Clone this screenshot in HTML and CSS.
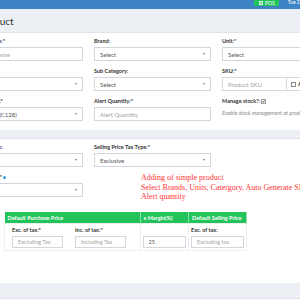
FILE: index.html
```html
<!DOCTYPE html>
<html lang="en">
<head>
    <meta charset="UTF-8">
    <meta name="viewport" content="width=device-width, initial-scale=1.0">
    <title>Add new product</title>
    <link rel="stylesheet" href="styles.css">
</head>
<body>
    <div class="topbar">
        <a class="btn-pos">
            <svg width="4" height="4" viewBox="0 0 4 4"><rect x="0" y="0" width="1.7" height="1.7" fill="#fff"/><rect x="2.3" y="0" width="1.7" height="1.7" fill="#fff"/><rect x="0" y="2.3" width="1.7" height="1.7" fill="#fff"/><rect x="2.3" y="2.3" width="1.7" height="1.7" fill="#fff"/></svg>
            POS
        </a>
        <span class="topbar-date">Tue 21</span>
    </div>

    <div class="page">
        <section class="content-header">
            <h1>Add new product</h1>
        </section>

        <div class="content">
            <!-- product details -->
            <div class="box">
                <div class="form-grid">
                    <div class="form-group">
                        <label>Product Name:*</label>
                        <input type="text" class="form-control" placeholder="Product Name">
                    </div>
                    <div class="form-group">
                        <label>Brand:</label>
                        <div class="form-control select"><span>Select</span><span class="caret"></span></div>
                    </div>
                    <div class="form-group">
                        <label>Unit:*</label>
                        <div class="form-control select"><span>Select</span><span class="caret"></span></div>
                    </div>

                    <div class="form-group">
                        <label>Category:</label>
                        <div class="form-control select"><span>Select</span><span class="caret"></span></div>
                    </div>
                    <div class="form-group">
                        <label>Sub Category:</label>
                        <div class="form-control select"><span>Select</span><span class="caret"></span></div>
                    </div>
                    <div class="form-group">
                        <label>SKU:*</label>
                        <div class="input-group">
                            <input type="text" class="form-control" placeholder="Product SKU">
                            <span class="input-addon"><span class="checkbox"></span>Auto SKU</span>
                        </div>
                    </div>

                    <div class="form-group">
                        <label>Barcode Type:*</label>
                        <div class="form-control select"><span>Code 128 (C128)</span><span class="caret"></span></div>
                    </div>
                    <div class="form-group">
                        <label>Alert Quantity:*</label>
                        <input type="text" class="form-control" placeholder="Alert Quantity">
                    </div>
                    <div class="form-group">
                        <label>Manage stock?: <svg class="check" width="5" height="5" viewBox="0 0 5 5"><rect x="0.3" y="0.3" width="4.4" height="4.4" fill="#fff" stroke="#777" stroke-width="0.6"/><path d="M1.1 2.5 L2.1 3.5 L3.9 1.3" fill="none" stroke="#333" stroke-width="0.8"/></svg></label>
                        <p class="help">Enable stock management at product level</p>
                    </div>
                </div>
            </div>

            <!-- pricing -->
            <div class="box box-pricing">
                <div class="form-grid">
                    <div class="form-group">
                        <label>Applicable Tax:</label>
                        <div class="form-control select"><span>None</span><span class="caret"></span></div>
                    </div>
                    <div class="form-group">
                        <label>Selling Price Tax Type:*</label>
                        <div class="form-control select"><span>Exclusive</span><span class="caret"></span></div>
                    </div>
                    <div></div>

                    <div class="form-group">
                        <label>Product Type:* <span class="info"></span></label>
                        <div class="form-control select"><span>Single</span><span class="caret"></span></div>
                    </div>
                    <div class="note">
                        Adding of simple product<br>
                        Select Brands, Units, Catergory, Auto Generate SKU<br>
                        Alert quantity
                    </div>
                </div>

                <table class="price-table">
                    <thead>
                        <tr>
                            <th class="col-purchase">Default Purchase Price</th>
                            <th class="col-margin">x Margin(%)</th>
                            <th class="col-selling">Default Selling Price</th>
                        </tr>
                    </thead>
                    <tbody>
                        <tr>
                            <td>
                                <div class="split">
                                    <div class="field">
                                        <label>Exc. of tax:*</label>
                                        <input type="text" class="form-control" placeholder="Excluding Tax">
                                    </div>
                                    <div class="field">
                                        <label>Inc. of tax:*</label>
                                        <input type="text" class="form-control" placeholder="Including Tax">
                                    </div>
                                </div>
                            </td>
                            <td>
                                <input type="text" class="form-control margin-input" value="25">
                            </td>
                            <td>
                                <div class="field field-selling">
                                    <label>Exc. of tax:</label>
                                    <input type="text" class="form-control" placeholder="Excluding tax">
                                </div>
                            </td>
                        </tr>
                    </tbody>
                </table>
            </div>

            <div class="box"></div>
        </div>
    </div>
</body>
</html>
```

FILE: styles.css
```css
html, body {
  margin: 0;
  height: 300px;
  overflow: hidden;
}

body {
  background-color: #ecf0f5;
  font-family: Lato, "Liberation Sans", sans-serif;
  color: #333;
}

/* top navbar */
.topbar {
  height: 9px;
  background-color: #3d84c6;
  display: flex;
  align-items: flex-start;
  gap: 9px;
  padding-left: 254px;
}

.btn-pos {
  display: flex;
  align-items: center;
  gap: 2px;
  height: 6px;
  padding: 0 4px 0 5px;
  background-color: #22c35a;
  color: white;
  font-size: 5px;
  line-height: 6px;
}

.topbar-date {
  color: white;
  font-size: 5px;
  line-height: 4px;
  white-space: nowrap;
}

/* page */
.page {
  width: 440px;
  margin-left: -62px;
}

.content-header {
  height: 23px;
}

.content-header h1 {
  margin: 0;
  font-size: 10px;
  font-weight: normal;
  line-height: 24px;
}

.content {
  padding-left: 24px;
}

.box {
  background-color: white;
  border-top: 1px solid #dfe3ea;
  padding: 4px 4px 3px;
  margin-bottom: 8px;
}

.box-pricing {
  padding-bottom: 32px;
  margin-bottom: 15px;
}

.form-grid {
  display: grid;
  grid-template-columns: repeat(3, 117px);
  column-gap: 11px;
}

.form-group {
  margin-bottom: 6px;
}

label {
  display: block;
  font-size: 5.5px;
  font-weight: bold;
  line-height: 8px;
  margin-bottom: 2px;
  white-space: nowrap;
}

.form-control {
  display: flex;
  align-items: center;
  justify-content: space-between;
  width: 100%;
  height: 14px;
  margin: 0;
  padding: 0 5px;
  box-sizing: border-box;
  border: 1px solid #d2d6de;
  border-radius: 0;
  background-color: white;
  font-family: Lato, "Liberation Sans", sans-serif;
  font-size: 6px;
  color: #555;
  white-space: nowrap;
}

.form-control::placeholder {
  color: #a4a4a4;
}

.caret {
  width: 0;
  height: 0;
  border-left: 1.5px solid transparent;
  border-right: 1.5px solid transparent;
  border-top: 2px solid #777;
}

.input-group {
  display: flex;
}

.input-group .form-control {
  width: 65px;
  flex: none;
}

.input-addon {
  display: flex;
  align-items: center;
  gap: 2px;
  height: 14px;
  box-sizing: border-box;
  padding: 0 4px;
  border: 1px solid #d2d6de;
  border-left: none;
  font-size: 5.5px;
  font-weight: bold;
  white-space: nowrap;
}

.checkbox {
  width: 3px;
  height: 3px;
  border: 0.7px solid #888;
  background-color: white;
}

.check {
  vertical-align: -1px;
}

.help {
  margin: 4px 0 0;
  font-size: 5.5px;
  font-style: italic;
  line-height: 8px;
  color: #888;
  white-space: nowrap;
}

.info {
  display: inline-block;
  width: 3px;
  height: 3px;
  border-radius: 50%;
  background-color: #3c9ce0;
}

.note {
  grid-column: 2 / 4;
  padding-left: 47px;
  font-family: "Liberation Serif", serif;
  font-size: 8px;
  line-height: 9.5px;
  color: #f33;
  white-space: nowrap;
}

/* price table */
.price-table {
  margin: 9px 0 0 38px;
  width: 243px;
  border-collapse: collapse;
}

.price-table th {
  height: 11px;
  padding: 0 3px;
  background-color: #22c35a;
  color: white;
  font-size: 5.5px;
  text-align: left;
  border-right: 1px solid #8fe0aa;
  white-space: nowrap;
}

.price-table .col-purchase {
  width: 129px;
}

.price-table td {
  vertical-align: top;
  padding: 2px;
  border: 1px solid #eee;
}

.split {
  display: flex;
  gap: 12px;
  padding-left: 5px;
}

.field {
  width: 51px;
}

.field-selling {
  width: 53px;
}

.price-table .form-control {
  height: 12px;
  font-size: 5.5px;
}

.margin-input {
  margin-top: 10px;
}
```
